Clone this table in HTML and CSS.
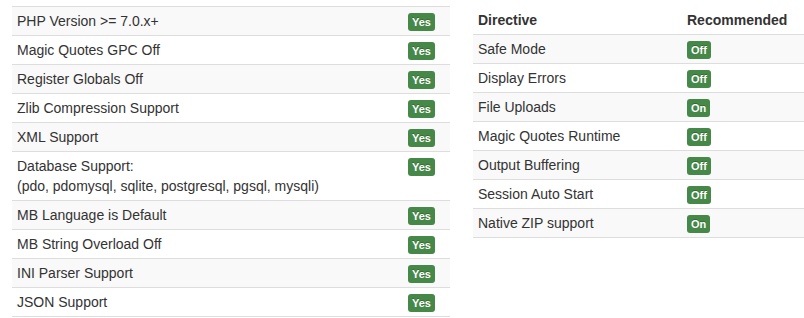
FILE: index.html
```html
<!DOCTYPE html>
<html>
<head>
<meta charset="utf-8">
<link rel="stylesheet" href="styles.css">
</head>
<body>
<div class="page">
  <table class="table table-left">
    <tbody>
      <tr><td class="name">PHP Version &gt;= 7.0.x+</td><td class="status"><span class="label">Yes</span></td></tr>
      <tr><td class="name">Magic Quotes GPC Off</td><td class="status"><span class="label">Yes</span></td></tr>
      <tr><td class="name">Register Globals Off</td><td class="status"><span class="label">Yes</span></td></tr>
      <tr><td class="name">Zlib Compression Support</td><td class="status"><span class="label">Yes</span></td></tr>
      <tr><td class="name">XML Support</td><td class="status"><span class="label">Yes</span></td></tr>
      <tr><td class="name">Database Support:<br>(pdo, pdomysql, sqlite, postgresql, pgsql, mysqli)</td><td class="status"><span class="label">Yes</span></td></tr>
      <tr><td class="name">MB Language is Default</td><td class="status"><span class="label">Yes</span></td></tr>
      <tr><td class="name">MB String Overload Off</td><td class="status"><span class="label">Yes</span></td></tr>
      <tr><td class="name">INI Parser Support</td><td class="status"><span class="label">Yes</span></td></tr>
      <tr><td class="name">JSON Support</td><td class="status"><span class="label">Yes</span></td></tr>
    </tbody>
  </table>
  <table class="table table-right">
    <thead>
      <tr><th class="dir">Directive</th><th class="rec">Recommended</th></tr>
    </thead>
    <tbody>
      <tr><td>Safe Mode</td><td><span class="label">Off</span></td></tr>
      <tr><td>Display Errors</td><td><span class="label">Off</span></td></tr>
      <tr><td>File Uploads</td><td><span class="label">On</span></td></tr>
      <tr><td>Magic Quotes Runtime</td><td><span class="label">Off</span></td></tr>
      <tr><td>Output Buffering</td><td><span class="label">Off</span></td></tr>
      <tr><td>Session Auto Start</td><td><span class="label">Off</span></td></tr>
      <tr><td>Native ZIP support</td><td><span class="label">On</span></td></tr>
    </tbody>
  </table>
</div>
</body>
</html>
```
FILE: styles.css
```css
html, body {
  margin: 0;
  padding: 0;
  background: #fff;
}
body {
  font-family: "Liberation Sans", Arial, Helvetica, sans-serif;
  font-size: 14px;
  line-height: 20px;
  color: #333;
}
.page {
  display: flex;
  align-items: flex-start;
  gap: 23px;
  padding: 6px 0 0 12px;
}
.table {
  border-collapse: collapse;
  border-spacing: 0;
  table-layout: fixed;
  flex: none;
}
.table td, .table th {
  padding: 4px 5px;
  line-height: 20px;
  text-align: left;
  vertical-align: top;
  border-top: 1px solid #ddd;
}
.table tbody tr:nth-child(odd) td {
  background: #f9f9f9;
}
.table-left {
  width: 438px;
  border-bottom: 1px solid #ddd;
}
.table-left .status {
  width: 37px;
}
.table-right {
  width: 331px;
  border-bottom: 1px solid #ddd;
}
.table-right thead th {
  border-top: 0;
  font-weight: bold;
  vertical-align: bottom;
}
.table-right .dir {
  width: 199px;
}
.label {
  display: inline-block;
  padding: 2px 4px;
  font-size: 10.998px;
  font-weight: bold;
  line-height: 14px;
  color: #fff;
  vertical-align: baseline;
  white-space: nowrap;
  text-shadow: 0 -1px 0 rgba(0, 0, 0, 0.25);
  background-color: #468847;
  border-radius: 3px;
}
```
